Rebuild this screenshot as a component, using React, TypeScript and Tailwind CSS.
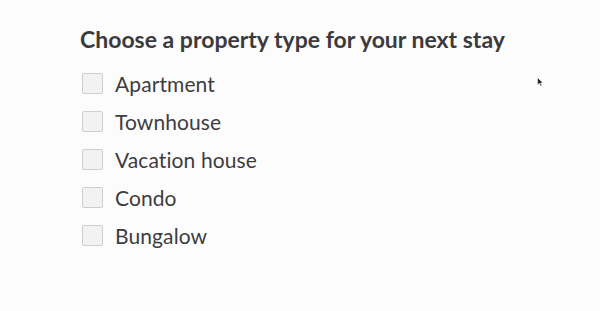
import React from "react";

const items = ["Apartment", "Townhouse", "Vacation house", "Condo", "Bungalow"];

export default function App() {
  return (
    <div className="relative w-[600px] h-[311px] bg-[#fdfcfd] text-[#3a393b] overflow-hidden" style={{ fontFamily: "Lato, 'Noto Sans', sans-serif" }}>
      <div className="pl-[80px] pt-[24px]">
        <h1 className="text-[23px] font-bold leading-[30px] tracking-[0px] text-[#3b3a3c]">Choose a property type for your next stay</h1>
        <ul className="mt-[19px] flex flex-col gap-[17px] pl-[2px]">
          {items.map((it) => (
            <li key={it} className="flex items-center gap-[12px] h-[21px]">
              <span className="w-[21px] h-[21px] rounded-[2px] border border-[#cfcecf] bg-[#f3f2f3] shrink-0" />
              <span className="text-[21px] leading-[21px] tracking-[0.1px] text-[#3d3c3e]">{it}</span>
            </li>
          ))}
        </ul>
      </div>
      <svg className="absolute left-[537px] top-[77px]" width="7" height="10" viewBox="0 0 7 10">
        <path d="M0.5 0.5 L0.5 8 L2.3 6.3 L3.6 9.3 L4.8 8.8 L3.6 6 L6 6 Z" fill="#222" stroke="#fff" strokeWidth="0.6" />
      </svg>
    </div>
  );
}
